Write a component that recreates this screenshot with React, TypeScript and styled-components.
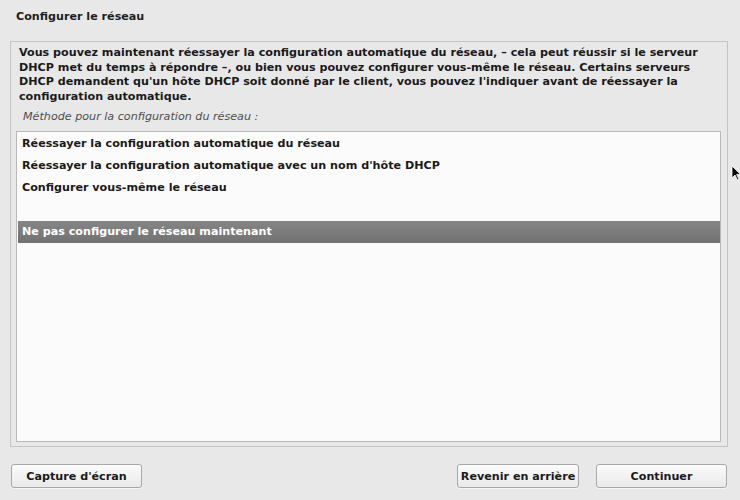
import React from "react";
import styled, { createGlobalStyle } from "styled-components";

const Global = createGlobalStyle`
  html, body { margin: 0; padding: 0; background: #e8e8e8; }
  body { font-family: "DejaVu Sans", "Liberation Sans", sans-serif; }
  * { box-sizing: border-box; }
`;

const Screen = styled.div`
  position: relative;
  width: 740px;
  height: 500px;
  display: flex;
  flex-direction: column;
  background: #e8e8e8;
  color: #1a1a1a;
  font-size: 11.15px;
  overflow: hidden;
`;

const Header = styled.div`
  height: 41px;
  padding: 9px 0 0 16px;
  font-weight: bold;
  line-height: 16px;
  color: #1e1e1e;
`;

const Panel = styled.div`
  flex: 1;
  margin: 0 12px 0 10px;
  border: 1px solid #c4c4c4;
  padding: 4px 6px 4px 5px;
  display: flex;
  flex-direction: column;
  min-height: 0;
`;

const Intro = styled.p`
  margin: 0 0 0 3px;
  font-weight: bold;
  line-height: 14.6px;
  color: #1a1a1a;
`;

const Label = styled.div`
  margin: 5px 0 7px 7px;
  font-style: italic;
  line-height: 15px;
  color: #4e4e4e;
`;

const List = styled.ul`
  flex: 1;
  margin: 0;
  padding: 1px 0 0 1px;
  list-style: none;
  background: #fbfbfb;
  border: 1px solid #b9b9b9;
`;

const Item = styled.li<{ $selected?: boolean }>`
  height: 22px;
  line-height: 22px;
  padding-left: 4px;
  font-weight: bold;
  white-space: nowrap;
  color: ${(p) => (p.$selected ? "#ffffff" : "#1a1a1a")};
  background: ${(p) =>
    p.$selected ? "linear-gradient(#858585, #727272)" : "transparent"};
`;

const Footer = styled.div`
  height: 53px;
  padding: 17px 13px 12px 11px;
  display: flex;
  align-items: flex-start;
  gap: 17px;
`;

const Spacer = styled.div`
  flex: 1;
`;

const Button = styled.button<{ $width: number }>`
  width: ${(p) => p.$width}px;
  height: 24px;
  padding: 0;
  border: 1px solid #a9a9a9;
  border-radius: 3px;
  background: linear-gradient(#fbfbfb, #e9e9e9);
  font-family: "DejaVu Sans", "Liberation Sans", sans-serif;
  font-size: 11.15px;
  font-weight: bold;
  white-space: nowrap;
  color: #1a1a1a;
  box-shadow: 0 1px 0 rgba(255, 255, 255, 0.6);
`;

const Cursor = styled.svg`
  position: absolute;
  left: 731px;
  top: 165px;
`;

const items = [
  "Réessayer la configuration automatique du réseau",
  "Réessayer la configuration automatique avec un nom d'hôte DHCP",
  "Configurer vous-même le réseau",
  "",
  "Ne pas configurer le réseau maintenant",
];

export default function App() {
  return (
    <Screen>
      <Global />
      <Header>Configurer le réseau</Header>
      <Panel>
        <Intro>
          Vous pouvez maintenant réessayer la configuration automatique du
          réseau, – cela peut réussir si le serveur DHCP met du temps à
          répondre –, ou bien vous pouvez configurer vous-même le réseau.
          Certains serveurs DHCP demandent qu'un hôte DHCP soit donné par le
          client, vous pouvez l'indiquer avant de réessayer la configuration
          automatique.
        </Intro>
        <Label>Méthode pour la configuration du réseau :</Label>
        <List>
          {items.map((t, i) => (
            <Item key={i} $selected={i === 4}>
              {t}
            </Item>
          ))}
        </List>
      </Panel>
      <Footer>
        <Button $width={131}>Capture d'écran</Button>
        <Spacer />
        <Button $width={122}>Revenir en arrière</Button>
        <Button $width={131}>Continuer</Button>
      </Footer>
      <Cursor width="10" height="16" viewBox="0 0 10 16">
        <path d="M1 1 L1 13 L4 10 L6.5 15 L8 14.3 L5.6 9.4 L9.5 9.4 Z" fill="#000" stroke="#fff" strokeWidth="0.8" />
      </Cursor>
    </Screen>
  );
}
